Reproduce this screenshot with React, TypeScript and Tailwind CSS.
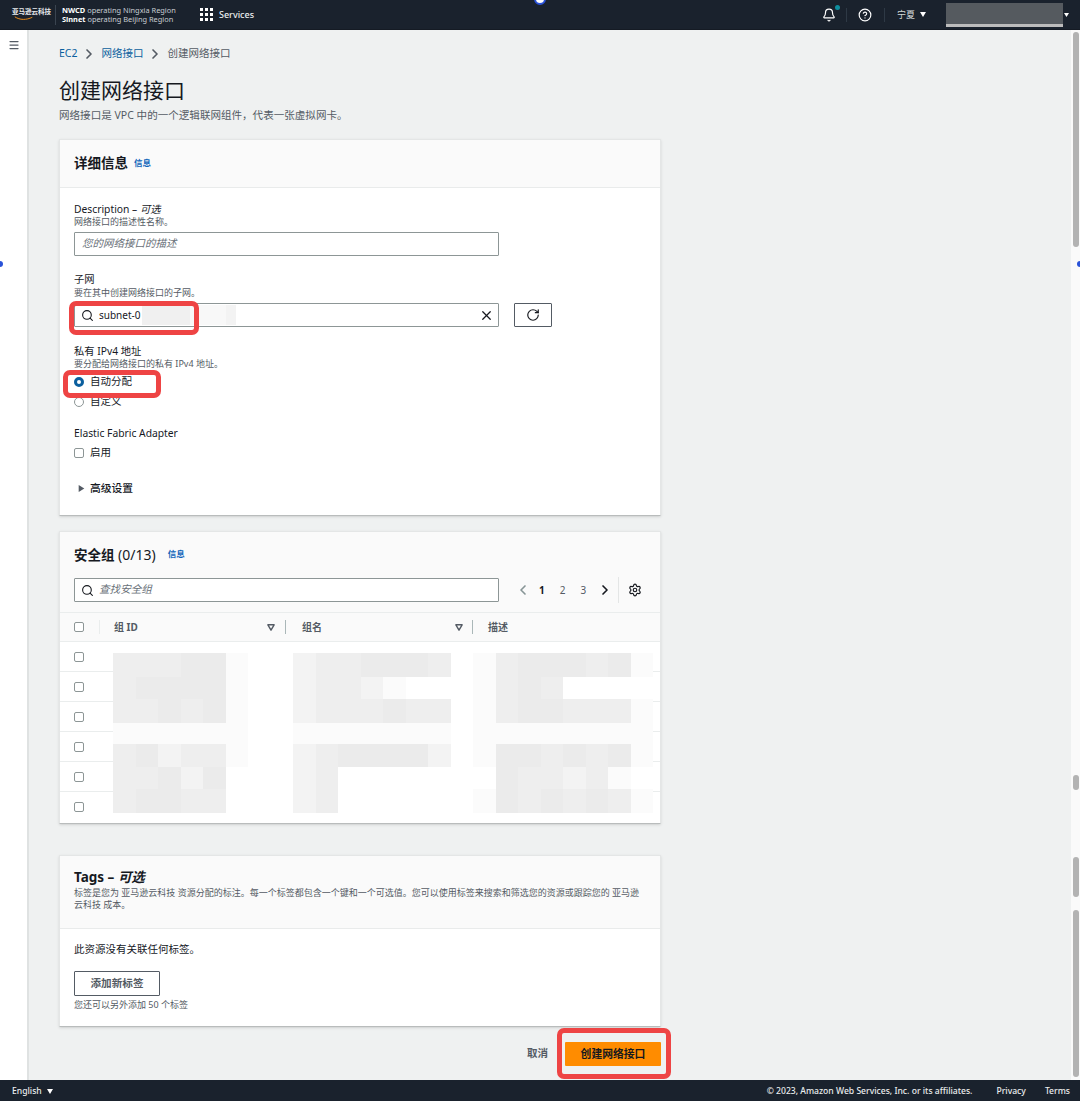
import { Bell, ChevronLeft, ChevronRight, CircleHelp, Menu, RotateCw, Search, Settings, X } from 'lucide-react';

const shades: Record<string, string> = {
    '0': 'bg-white',
    '1': 'bg-[#fbfbfb]',
    '2': 'bg-[#f3f3f3]',
    '3': 'bg-[#eeeeee]',
    '4': 'bg-[#ebebeb]',
};

// mosaic that hides the security group rows
const mosaic = [
    { h: 'h-[24px]', cells: '333441002334443' + '013444341' },
    { h: 'h-[22px]', cells: '344441002332100' + '013430000' },
    { h: 'h-[24px]', cells: '334341002333433' + '013443331' },
    { h: 'h-[21px]', cells: '111111001111111' + '011111111' },
    { h: 'h-[23px]', cells: '342331002344442' + '014434341' },
    { h: 'h-[22px]', cells: '334240002300000' + '004332310' },
    { h: 'h-[24px]', cells: '344330002300000' + '014343431' },
];

const Caret = ({ className }: { className: string }) => (
    <svg viewBox="0 0 10 8" className={className}>
        <path d="M0 0h10L5 8z" fill="currentColor" />
    </svg>
);

const FilterCaret = () => (
    <svg viewBox="0 0 10 9" className="w-[8px] h-[7px] text-[#545b64]">
        <path d="M1 1h8L5 8z" fill="none" stroke="currentColor" strokeWidth="1.8" strokeLinejoin="round" />
    </svg>
);

const Checkbox = () => <div className="w-[10px] h-[10px] rounded-[2px] border border-[#8d9696] bg-white"></div>;

const Info = () => <span className="text-[8.5px] leading-none font-bold text-[#1166bb]">信息</span>;

const Highlight = ({ className }: { className: string }) => (
    <div className={`absolute border-[5px] border-[#ee4444] rounded-[7px] ${className}`}></div>
);

const TopBar = () => {
    return (
        <div className="flex items-center h-[30px] shrink-0 bg-[#1a222d] text-white border-b border-[#151b24]">
            <div className="relative w-[56px] pl-[12px] h-[20px] border-r border-[#3a4450] flex flex-col pt-[2px]">
                <span className="text-[6.5px] leading-[9px] font-bold text-[#e9ebed] whitespace-nowrap">亚马逊云科技</span>
                <svg viewBox="0 0 24 6" className="w-[22px] h-[5px] ml-[1px]">
                    <path d="M1 1c6 4 14 4 21 .5" fill="none" stroke="#e88b1a" strokeWidth="1.2" />
                </svg>
            </div>
            <div className="pl-[6px] w-[132px] text-[7.4px] leading-[8.5px] text-[#c8cdd2] whitespace-nowrap">
                <div><span className="font-bold text-white">NWCD</span> operating Ningxia Region</div>
                <div><span className="font-bold text-white">Sinnet</span> operating Beijing Region</div>
            </div>
            <div className="grid grid-cols-3 gap-[2px] w-[13px] ml-[12px]">
                {Array.from({ length: 9 }).map((_, i) => (
                    <div key={i} className="w-[3px] h-[3px] bg-white"></div>
                ))}
            </div>
            <span className="ml-[6px] text-[9px] font-medium text-[#eaeded]">Services</span>
            <div className="flex-1"></div>
            <div className="relative">
                <Bell className="w-[14px] h-[14px] text-white" strokeWidth={2} />
                <div className="absolute -top-[3px] -right-[4px] w-[5px] h-[5px] rounded-full bg-[#0f8f9f]"></div>
            </div>
            <div className="w-px h-[14px] bg-[#2e3945] ml-[10px]"></div>
            <CircleHelp className="w-[14px] h-[14px] ml-[11px] text-white" strokeWidth={2} />
            <div className="w-px h-[14px] bg-[#2e3945] ml-[12px]"></div>
            <span className="ml-[12px] text-[9px] text-[#d5dbdb]">宁夏</span>
            <Caret className="w-[6px] h-[5px] ml-[5px] text-white" />
            <div className="w-[117px] h-[24px] ml-[20px] mt-[1px] bg-[#555a5f] border-b-[3px] border-[#bcbcbc]"></div>
            <Caret className="w-[5px] h-[4px] ml-[1px] mr-[11px] text-white" />
        </div>
    );
};

const Footer = () => {
    return (
        <div className="flex items-center h-[21px] pt-[2px] shrink-0 bg-[#1a222d] text-[8.6px] font-medium text-[#eaeded]">
            <span className="ml-[12px]">English</span>
            <Caret className="w-[6px] h-[5px] ml-[5px] text-white" />
            <div className="flex-1"></div>
            <span>© 2023, Amazon Web Services, Inc. or its affiliates.</span>
            <span className="ml-[24px]">Privacy</span>
            <span className="ml-[19px] mr-[10px]">Terms</span>
        </div>
    );
};

const DetailsCard = () => {
    return (
        <div className="w-[602px] h-[377px] mt-[17px] bg-white border border-[#e4e6e6] border-b-[#b9bcbc] shadow-sm">
            <div className="flex items-center gap-[6px] h-[48px] px-[14px] bg-[#fafafa] border-b border-[#e9ebeb]">
                <h2 className="text-[13.5px] font-bold text-[#16191f]">详细信息</h2>
                <Info />
            </div>
            <div className="px-[14px] pt-[14px]">
                <div className="text-[10.3px] leading-[14px] text-[#16191f]">Description – <i>可选</i></div>
                <div className="text-[9px] leading-[12px] text-[#545b64]">网络接口的描述性名称。</div>
                <div className="flex items-center w-[425px] h-[24px] mt-[4px] px-[7px] border border-[#8d9696] rounded-[1px] text-[10.5px] italic text-[#687078]">
                    您的网络接口的描述
                </div>

                <div className="mt-[16px] text-[10.3px] leading-[14px] text-[#16191f]">子网</div>
                <div className="mt-[1px] text-[9px] leading-[12px] text-[#545b64]">要在其中创建网络接口的子网。</div>
                <div className="flex items-center gap-[15px] mt-[4px]">
                    <div className="relative flex items-center w-[425px] h-[24px] px-[6px] border border-[#8d9696] rounded-[1px]">
                        <Search className="w-[13px] h-[13px] text-[#16191f]" />
                        <span className="ml-[5px] text-[10px] text-[#16191f]">subnet-0</span>
                        {/* redacted part of the subnet id */}
                        <div className="absolute left-[67px] top-[1px] flex h-[20px]">
                            <div className="w-[48px] bg-[#f0f0f0]"></div>
                            <div className="w-[36px] bg-[#f8f8f8]"></div>
                            <div className="w-[10px] bg-[#f3f3f3]"></div>
                        </div>
                        <X className="absolute right-[4px] w-[15px] h-[15px] text-[#16191f]" />
                    </div>
                    <div className="flex items-center justify-center w-[38px] h-[24px] border border-[#545b64] rounded-[1px]">
                        <RotateCw className="w-[14px] h-[14px] text-[#16191f]" />
                    </div>
                </div>

                <div className="mt-[17px] text-[10.3px] leading-[14px] text-[#16191f]">私有 IPv4 地址</div>
                <div className="text-[9px] leading-[12px] text-[#545b64]">要分配给网络接口的私有 IPv4 地址。</div>
                <div className="flex items-center h-[13px] mt-[5px]">
                    <div className="w-[10px] h-[10px] rounded-full border-[3px] border-[#0b5f9e] bg-white"></div>
                    <span className="ml-[6px] text-[10.5px] text-[#16191f]">自动分配</span>
                </div>
                <div className="flex items-center h-[13px] mt-[7px]">
                    <div className="w-[10px] h-[10px] rounded-full border border-[#8d9696] bg-white"></div>
                    <span className="ml-[6px] text-[10.5px] text-[#16191f]">自定义</span>
                </div>

                <div className="mt-[18px] text-[10.3px] leading-[14px] text-[#16191f]">Elastic Fabric Adapter</div>
                <div className="flex items-center h-[13px] mt-[6px]">
                    <Checkbox />
                    <span className="ml-[6px] text-[10.5px] text-[#16191f]">启用</span>
                </div>

                <div className="flex items-center h-[14px] mt-[22px] ml-[4px]">
                    <Caret className="w-[7px] h-[7px] -rotate-90 text-[#545b64]" />
                    <span className="ml-[5px] text-[10.75px] font-medium text-[#16191f]">高级设置</span>
                </div>
            </div>
        </div>
    );
};

const SecurityGroupsCard = () => {
    return (
        <div className="relative w-[602px] h-[293px] mt-[15px] bg-white border border-[#e4e6e6] border-b-[#b9bcbc] shadow-sm">
            <div className="h-[80px] px-[14px] bg-[#fafafa]">
                <div className="flex items-center gap-[12px] h-[45px]">
                    <h2 className="text-[13.5px] font-bold text-[#16191f]">
                        安全组 <span className="font-normal text-[14px]">(0/13)</span>
                    </h2>
                    <Info />
                </div>
                <div className="flex items-center">
                    <div className="flex items-center w-[425px] h-[24px] px-[6px] bg-white border border-[#8d9696] rounded-[1px]">
                        <Search className="w-[13px] h-[13px] text-[#16191f]" />
                        <span className="ml-[5px] text-[10.6px] italic text-[#687078]">查找安全组</span>
                    </div>
                    <ChevronLeft className="w-[16px] h-[16px] ml-[16px] text-[#879596]" strokeWidth={2.5} />
                    <span className="ml-[8px] text-[10px] font-bold text-[#16191f]">1</span>
                    <span className="ml-[15px] text-[10px] text-[#545b64]">2</span>
                    <span className="ml-[15px] text-[10px] text-[#545b64]">3</span>
                    <ChevronRight className="w-[16px] h-[16px] ml-[11px] text-[#16191f]" strokeWidth={2.5} />
                    <div className="w-px h-[26px] ml-[5px] bg-[#e4e6e6]"></div>
                    <Settings className="w-[14px] h-[14px] ml-[9px] text-[#16191f]" />
                </div>
            </div>
            <div className="flex items-center h-[30px] bg-[#fafafa] border-y border-[#eaeded] text-[10px] font-bold text-[#545b64]">
                <div className="ml-[14px]"><Checkbox /></div>
                <div className="w-px h-[14px] ml-[15px] bg-[#eaeded]"></div>
                <span className="ml-[14px] w-[153px]">组 ID</span>
                <FilterCaret />
                <div className="w-px h-[14px] ml-[10px] bg-[#aab7b8]"></div>
                <span className="ml-[16px] w-[153px]">组名</span>
                <FilterCaret />
                <div className="w-px h-[14px] ml-[9px] bg-[#aab7b8]"></div>
                <span className="ml-[15px]">描述</span>
            </div>
            {Array.from({ length: 6 }).map((_, i) => (
                <div key={i} className={`flex items-start h-[30px] pt-[10px] pl-[14px] ${i < 5 ? 'border-b border-[#eaeded]' : ''}`}>
                    <Checkbox />
                </div>
            ))}
            <div className="absolute left-[53px] top-[121px] w-[540px]">
                {mosaic.map((row, r) => (
                    <div key={r} className={`grid grid-cols-[repeat(24,22.5px)] ${row.h}`}>
                        {row.cells.split('').map((c, i) => (
                            <div key={i} className={shades[c]}></div>
                        ))}
                    </div>
                ))}
            </div>
        </div>
    );
};

const TagsCard = () => {
    return (
        <div className="w-[602px] h-[172px] mt-[31px] bg-white border border-[#e4e6e6] border-b-[#b9bcbc] shadow-sm">
            <div className="h-[73px] px-[14px] pt-[12px] bg-[#fafafa] border-b border-[#e9ebeb]">
                <h2 className="text-[13.5px] leading-[19px] font-bold text-[#16191f]">Tags – <i>可选</i></h2>
                <p className="text-[9px] leading-[12px] text-[#545b64]">
                    标签是您为 亚马逊云科技 资源分配的标注。每一个标签都包含一个键和一个可选值。您可以使用标签来搜索和筛选您的资源或跟踪您的 亚马逊云科技 成本。
                </p>
            </div>
            <div className="px-[14px] pt-[13px]">
                <div className="text-[10.5px] leading-[14px] text-[#16191f]">此资源没有关联任何标签。</div>
                <div className="flex items-center justify-center w-[86px] h-[25px] mt-[15px] border border-[#545b64] rounded-[1px] text-[10.6px] font-bold text-[#545b64]">
                    添加新标签
                </div>
                <div className="mt-[3px] text-[9px] leading-[12px] text-[#545b64]">您还可以另外添加 50 个标签</div>
            </div>
        </div>
    );
};

const App = () => {
    return (
        <div className="relative flex flex-col w-[1080px] h-[1101px] overflow-hidden bg-[#eff1f1] font-['Noto_Sans','Noto_Sans_CJK_SC',sans-serif]">
            <TopBar />
            <div className="flex flex-1 min-h-0">
                <div className="w-[29px] shrink-0 bg-white border-r-2 border-[#dfe2e2] pt-[9px] pl-[8px]">
                    <Menu className="w-[12px] h-[12px] text-[#545b64]" strokeWidth={2.5} />
                </div>
                <div className="flex-1 pl-[30px]">
                    <div className="flex items-center h-[14px] mt-[17px] text-[10.5px]">
                        <span className="text-[#0b5f9e]">EC2</span>
                        <ChevronRight className="w-[16px] h-[16px] mx-[4px] text-[#545b64]" strokeWidth={2.5} />
                        <span className="text-[#0b5f9e]">网络接口</span>
                        <ChevronRight className="w-[16px] h-[16px] mx-[4px] text-[#545b64]" strokeWidth={2.5} />
                        <span className="text-[#545b64]">创建网络接口</span>
                    </div>
                    <h1 className="mt-[15px] text-[21px] leading-[28px] text-[#16191f]">创建网络接口</h1>
                    <p className="mt-[4px] text-[10.55px] leading-[14px] text-[#545b64]">网络接口是 VPC 中的一个逻辑联网组件，代表一张虚拟网卡。</p>
                    <DetailsCard />
                    <SecurityGroupsCard />
                    <TagsCard />
                    <div className="flex items-center justify-end w-[602px] mt-[15px]">
                        <span className="text-[10.5px] font-bold text-[#545b64]">取消</span>
                        <div className="flex items-center justify-center w-[96px] h-[24px] ml-[17px] bg-[#ff8c00] rounded-[1px] text-[10.8px] font-bold text-[#16191f]">
                            创建网络接口
                        </div>
                    </div>
                </div>
                <div className="flex flex-col w-[9px] shrink-0 pl-[2px] pr-[1px] pt-[2px] bg-[#fafafa]">
                    <div className="h-[215px] rounded-full bg-[#b3b3b3]"></div>
                    <div className="h-[15px] mt-[528px] rounded-full bg-[#b3b3b3]"></div>
                    <div className="h-[40px] mt-[67px] rounded-full bg-[#b3b3b3]"></div>
                    <div className="h-[167px] mt-[13px] rounded-full bg-[#b3b3b3]"></div>
                </div>
            </div>
            <Footer />

            <Highlight className="left-[69px] top-[301px] w-[130px] h-[34px]" />
            <Highlight className="left-[63px] top-[370px] w-[98px] h-[28px]" />
            <Highlight className="left-[557px] top-[1028px] w-[114px] h-[51px]" />

            <div className="absolute left-[534px] -top-[7px] w-[12px] h-[12px] rounded-full bg-white border-[2px] border-[#2a52d8]"></div>
            <div className="absolute -left-[3px] top-[261px] w-[6px] h-[6px] rounded-full bg-[#2a52d8]"></div>
            <div className="absolute -right-[3px] top-[261px] w-[6px] h-[6px] rounded-full bg-[#2a52d8]"></div>
        </div>
    );
};

export default App;
